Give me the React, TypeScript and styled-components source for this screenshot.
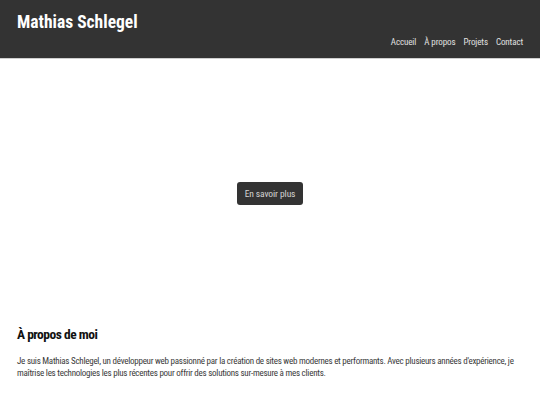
import React from "react";
import styled, { createGlobalStyle } from "styled-components";

const GlobalStyle = createGlobalStyle`
  html, body {
    margin: 0;
    padding: 0;
    background: #ffffff;
    font-family: "Roboto Condensed", "Liberation Sans", sans-serif;
  }
`;

const Header = styled.header`
  height: 58px;
  background-color: #333333;
  border-bottom: 1px solid #cfcfcf;
  display: flex;
  justify-content: space-between;
  padding: 0 17px;
`;

const Title = styled.h1`
  margin: 0;
  padding-top: 12px;
  color: #ffffff;
  font-size: 17.5px;
  font-weight: 700;
`;

const Nav = styled.nav`
  display: flex;
  gap: 8px;
  align-items: flex-end;
  padding-bottom: 11px;
`;

const NavLink = styled.a`
  color: #e0e0e0;
  font-size: 9px;
  font-weight: 400;
  letter-spacing: -0.1px;
  text-decoration: none;
`;

const Hero = styled.section`
  height: 255px;
  display: flex;
  align-items: center;
  justify-content: center;
`;

const Button = styled.button`
  background-color: #333333;
  color: #d4d4d4;
  border: none;
  border-radius: 3px;
  padding: 0 8px;
  height: 23px;
  font-family: inherit;
  font-size: 9.5px;
  letter-spacing: -0.1px;
  margin-top: 14px;
`;

const About = styled.section`
  padding: 12px 17px 0;
`;

const Heading = styled.h2`
  margin: 0 0 13px;
  font-size: 13.5px;
  font-weight: 700;
  letter-spacing: -0.5px;
  color: #111111;
`;

const Text = styled.p`
  margin: 0;
  font-size: 9px;
  line-height: 12px;
  letter-spacing: -0.25px;
  color: #3a3a3a;
`;

export default function App() {
  return (
    <>
      <GlobalStyle />
      <Header>
        <Title>Mathias Schlegel</Title>
        <Nav>
          <NavLink href="#">Accueil</NavLink>
          <NavLink href="#">À propos</NavLink>
          <NavLink href="#">Projets</NavLink>
          <NavLink href="#">Contact</NavLink>
        </Nav>
      </Header>
      <Hero>
        <Button>En savoir plus</Button>
      </Hero>
      <About>
        <Heading>À propos de moi</Heading>
        <Text>
          Je suis Mathias Schlegel, un développeur web passionné par la création de sites web
          modernes et performants. Avec plusieurs années d'expérience, je maîtrise les
          technologies les plus récentes pour offrir des solutions sur-mesure à mes clients.
        </Text>
      </About>
    </>
  );
}
